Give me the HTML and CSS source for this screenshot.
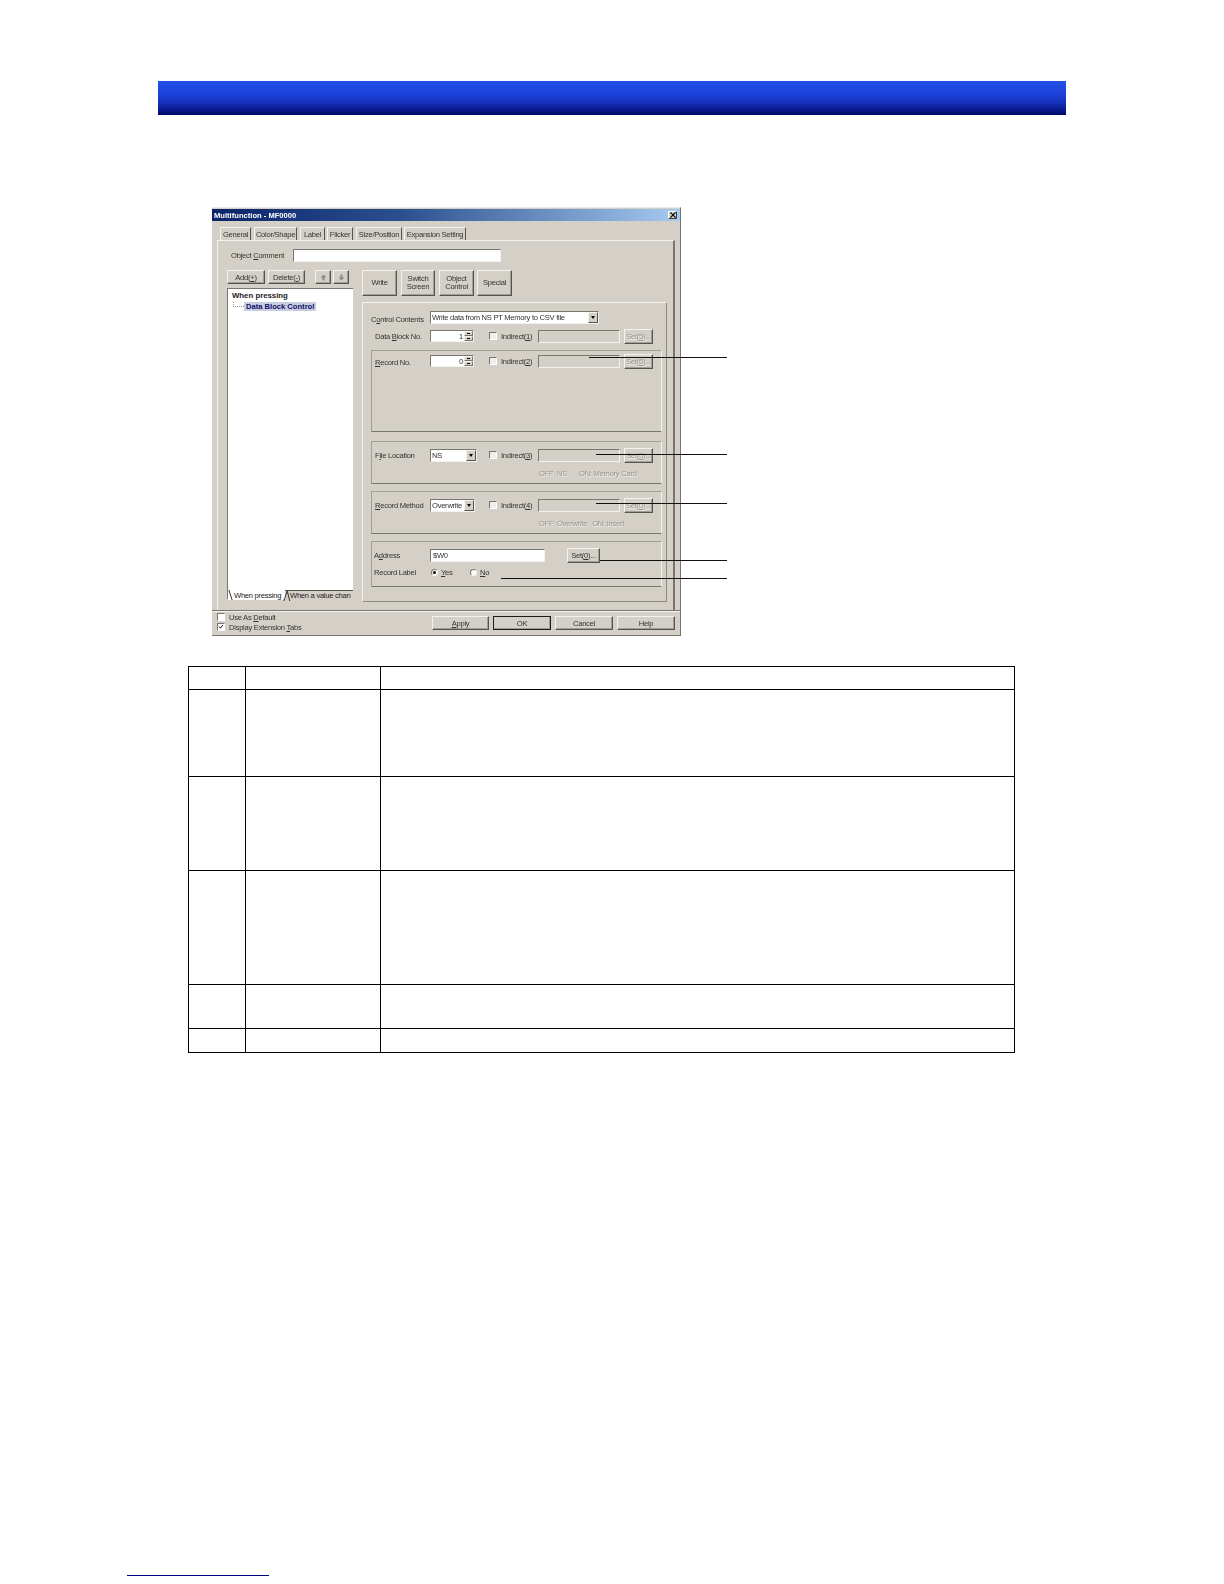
FILE: index.html
```html
<!DOCTYPE html>
<html lang="en">
<head>
<meta charset="utf-8">
<title>Multifunction - MF0000</title>
<link rel="stylesheet" href="styles.css">
</head>
<body>
<div class="band"></div>
<div class="dialog">
  <div class="titlebar">
    <span class="title">Multifunction - MF0000</span>
    <span class="closebtn"><svg width="7" height="7" viewBox="0 0 7 7"><path d="M0.5 0.5L6.5 6.5M6.5 0.5L0.5 6.5" stroke="#000" stroke-width="1.4"/></svg></span>
  </div>
  <div class="tabs">
    <span class="tab tab-active tab-general">General</span>
    <span class="tab tab-color">Color/Shape</span>
    <span class="tab tab-label">Label</span>
    <span class="tab tab-flicker">Flicker</span>
    <span class="tab tab-size">Size/Position</span>
    <span class="tab tab-exp">Expansion Setting</span>
  </div>
  <div class="panel">
    <div class="comment-row">
      <span class="comment-label">Object <u>C</u>omment</span>
      <span class="input comment-input"></span>
    </div>
    <div class="main">
      <div class="left">
        <div class="list-tools">
          <span class="btn btn-add">Add(<u>+</u>)</span>
          <span class="btn btn-del">Delete(<u>-</u>)</span>
          <span class="btn btn-arrow btn-up"><svg width="7" height="7" viewBox="0 0 7 7"><path d="M3.5 0.5L6.5 3.5H4.5V6.5H2.5V3.5H0.5Z" fill="#8a8a86"/></svg></span>
          <span class="btn btn-arrow"><svg width="7" height="7" viewBox="0 0 7 7"><path d="M3.5 6.5L6.5 3.5H4.5V0.5H2.5V3.5H0.5Z" fill="#8a8a86"/></svg></span>
        </div>
        <div class="tree">
          <div class="tree-root">When pressing</div>
          <div class="tree-child"><span class="tree-dots"></span><span class="tree-sel">Data Block Control</span></div>
          <div class="tree-tabs">
            <span class="ttab ttab-on">When pressing</span>
            <span class="ttab ttab-off">When a value chan</span>
          </div>
        </div>
      </div>
      <div class="right">
        <div class="actions">
          <span class="btn action">Write</span>
          <span class="btn action action-narrow">Switch<br>Screen</span>
          <span class="btn action">Object<br>Control</span>
          <span class="btn action action-last">Special</span>
        </div>
        <div class="inner">
          <div class="cc-row">
            <span class="cc-label">C<u>o</u>ntrol Contents</span>
            <span class="input select cc-select"><span class="sel-text">Write data from NS PT Memory to CSV file</span><span class="drop"></span></span>
          </div>
          <div class="frow frow-top">
            <span class="flabel">Data <u>B</u>lock No.</span>
            <span class="cell"><span class="input spin"><span class="spin-val">1</span><span class="spinbtns"><i class="sb sb-up"></i><i class="sb sb-down"></i></span></span></span>
            <span class="chk"></span><span class="indirect">Indirect(<u>1</u>)</span>
            <span class="field"></span><span class="btn setbtn">Set(<u>5</u>)...</span>
          </div>
          <div class="group g1">
            <div class="frow">
              <span class="flabel flabel-low"><u>R</u>ecord No.</span>
              <span class="cell"><span class="input spin"><span class="spin-val">0</span><span class="spinbtns"><i class="sb sb-up"></i><i class="sb sb-down"></i></span></span></span>
              <span class="chk"></span><span class="indirect">Indirect(<u>2</u>)</span>
              <span class="field"></span><span class="btn setbtn">Set(<u>6</u>)...</span>
            </div>
          </div>
          <div class="group g2">
            <div class="frow">
              <span class="flabel">F<u>i</u>le Location</span>
              <span class="cell"><span class="input select sel-file"><span class="sel-text">NS</span><span class="drop"></span></span></span>
              <span class="chk"></span><span class="indirect">Indirect(<u>3</u>)</span>
              <span class="field"></span><span class="btn setbtn">Set(<u>0</u>)...</span>
            </div>
            <div class="note">OFF: NS<span class="note-gap"></span>ON: Memory Card</div>
          </div>
          <div class="group g3">
            <div class="frow">
              <span class="flabel"><u>R</u>ecord Method</span>
              <span class="cell"><span class="input select sel-method"><span class="sel-text">Overwrite</span><span class="drop"></span></span></span>
              <span class="chk"></span><span class="indirect">Indirect(<u>4</u>)</span>
              <span class="field"></span><span class="btn setbtn">Set(<u>0</u>)...</span>
            </div>
            <div class="note">OFF: Overwrite<span class="note-gap-sm"></span>ON: Insert</div>
          </div>
          <div class="group g4">
            <div class="frow">
              <span class="flabel flabel-tight">A<u>d</u>dress</span>
              <span class="input addr">$W0</span>
              <span class="btn setbtn setbtn-on">Set(<u>0</u>)...</span>
            </div>
            <div class="frow frow-radio">
              <span class="flabel flabel-tight">Record Label</span>
              <span class="radio radio-on"></span><span class="radio-text radio-yes"><u>Y</u>es</span>
              <span class="radio"></span><span class="radio-text"><u>N</u>o</span>
            </div>
          </div>
        </div>
      </div>
    </div>
  </div>
  <div class="footer">
    <div class="checks">
      <div class="check-row"><span class="chk chk-white"></span><span>Use As <u>D</u>efault</span></div>
      <div class="check-row"><span class="chk chk-white"><svg width="8" height="8" viewBox="0 0 8 8"><path d="M1.5 3.5L3.2 5.5L6.5 1.5" fill="none" stroke="#000" stroke-width="1.3"/></svg></span><span>Display Extension <u>T</u>abs</span></div>
    </div>
    <div class="foot-btns">
      <span class="btn foot-btn foot-apply"><u>A</u>pply</span>
      <span class="btn foot-btn foot-ok">OK</span>
      <span class="btn foot-btn">Cancel</span>
      <span class="btn foot-btn">Help</span>
    </div>
  </div>
  <i class="callout c1"></i>
  <i class="callout c2"></i>
  <i class="callout c3"></i>
  <i class="callout c4"></i>
  <i class="callout c5"></i>
</div>
<table class="spec">
  <tr class="r1"><td class="col-a"></td><td class="col-b"></td><td></td></tr>
  <tr class="r2"><td></td><td></td><td></td></tr>
  <tr class="r3"><td></td><td></td><td></td></tr>
  <tr class="r4"><td></td><td></td><td></td></tr>
  <tr class="r5"><td></td><td></td><td></td></tr>
  <tr class="r6"><td></td><td></td><td></td></tr>
</table>
<div class="foot-rule"></div>
</body>
</html>
```

FILE: styles.css
```css
* { box-sizing: border-box; }
html, body { margin: 0; padding: 0; background: #fff; }
body { width: 1224px; height: 1584px; overflow: hidden; padding-top: 81px; font-family: "Liberation Sans", Arial, sans-serif; }

.band {
  width: 908px; height: 34px; margin-left: 158px;
  background: linear-gradient(to bottom, #2450ea 0%, #1c40d8 40%, #1430b8 65%, #000868 100%);
}

.dialog {
  position: relative;
  width: 469px; height: 429px;
  margin: 92px 0 0 212px;
  background: #d4d0c8;
  border-top: 1px solid #ece9e2;
  border-right: 1px solid #77766f;
  border-bottom: 1px solid #77766f;
  font-size: 7.6px;
  letter-spacing: -.27px;
  color: #33332f;
  display: flex; flex-direction: column;
}
.dialog u { text-decoration: underline; }

.titlebar {
  height: 12px; margin: 1px 0 0 0; flex: none;
  background: linear-gradient(to right, #0a246a 0%, #2b4f8e 40%, #a6caf0 100%);
  display: flex; align-items: center; justify-content: space-between;
  padding: 0 3px 0 2px;
  filter: blur(.3px);
}
.title { color: #fff; font-weight: bold; font-size: 7.6px; letter-spacing: 0; }
.closebtn {
  width: 9px; height: 8px; background: #d4d0c8;
  border: 1px solid; border-color: #fff #404040 #404040 #fff;
  display: flex; align-items: center; justify-content: center;
}
.closebtn svg { width: 6px; height: 6px; }

.tabs { display: flex; height: 13px; margin: 6px 0 0 8px; flex: none; align-items: stretch; filter: blur(.3px); }
.tab {
  display: flex; align-items: center; justify-content: center; white-space: nowrap;
  border-right: 1px solid #55544f;
  border-left: 1px solid #f4f2ee;
  border-top: 1px solid #f4f2ee;
}
.tab-general { width: 31px; margin-right: 3px; border-bottom: 0; }
.tab-color { width: 43px; margin-right: 3px; }
.tab-label { width: 25px; margin-right: 2px; }
.tab-flicker { width: 26px; margin-right: 3px; }
.tab-size { width: 46px; margin-right: 2px; }
.tab-exp { width: 62px; }

.panel {
  width: 458px; height: 370px; margin-left: 5px; flex: none;
  border-top: 1px solid #f4f2ee;
  border-left: 1px solid #f4f2ee;
  border-right: 2px solid #77766f;
  display: flex; flex-direction: column;
  filter: blur(.3px);
}
.comment-row { display: flex; align-items: center; height: 13px; margin: 8px 0 0 13px; }
.comment-label { width: 62px; }
.comment-input { width: 208px; height: 13px; }
.input {
  display: inline-flex; align-items: center; background: #fff;
  border: 1px solid; border-color: #77766f #f4f2ee #f4f2ee #77766f;
  white-space: nowrap;
}
.main { display: flex; margin: 8px 0 0 9px; }
.left { width: 126px; margin-right: 9px; display: flex; flex-direction: column; }
.list-tools { display: flex; height: 14px; }
.btn {
  display: inline-flex; align-items: center; justify-content: center; text-align: center;
  background: #d4d0c8; white-space: nowrap;
  border: 1px solid; border-color: #f4f2ee #55544f #55544f #f4f2ee;
  box-shadow: inset -1px -1px 0 #a09e98;
}
.btn-add { width: 38px; margin-right: 3px; }
.btn-del { width: 37px; margin-right: 10px; }
.btn-arrow { width: 16px; }
.btn-up { margin-right: 2px; }

.tree {
  height: 311px; margin-top: 4px; background: #fff; position: relative;
  border-left: 1px solid #77766f; border-top: 1px solid #77766f;
  display: flex; flex-direction: column;
  padding: 2px 0 0 4px;
  color: #1c1c1a;
}
.tree-root { font-weight: bold; font-size: 7.8px; height: 10px; line-height: 10px; letter-spacing: 0; }
.tree-child { display: flex; align-items: center; height: 10px; }
.tree-dots { width: 11px; height: 5px; border-left: 1px dotted #999; border-bottom: 1px dotted #999; margin: 0 0 3px 1px; }
.tree-sel { background: #c8cee0; color: #10106a; font-weight: bold; font-size: 7.6px; padding: 0 2px; line-height: 9px; white-space: nowrap; letter-spacing: 0; }
.tree-tabs { position: absolute; left: 0; right: 0; bottom: -1px; height: 10px; display: flex; white-space: nowrap; }
.ttab { display: flex; align-items: center; position: relative; }
.ttab-on { width: 55px; padding-left: 6px; background: #fff; }
.ttab-off { flex: 1; min-width: 0; margin-left: 2px; padding-left: 5px; background: #d4d0c8; border-top: 1px solid #55544f; }
.ttab::before { content: ""; position: absolute; left: 2px; top: 0; height: 10px; border-left: 1px solid #33332f; transform: skewX(18deg); }
.ttab-off::before { left: 0; transform: skewX(-18deg); }
.ttab-off::after { content: ""; position: absolute; left: 3px; top: 0; height: 10px; border-left: 1px solid #33332f; transform: skewX(14deg); }

.right { width: 305px; }
.actions { display: flex; gap: 4px; height: 26px; }
.action { width: 35px; line-height: 8.5px; }
.action-narrow { width: 34px; }
.action-last { margin-left: -1px; }
.inner {
  height: 300px; margin-top: 6px;
  border-top: 1px solid #f4f2ee; border-left: 1px solid #f4f2ee;
  border-right: 1px solid #8a8983; border-bottom: 1px solid #8a8983;
  padding: 8px 4px 0 8px;
}
.cc-row { display: flex; align-items: center; height: 13px; }
.cc-label { width: 59px; white-space: nowrap; margin-top: 3px; }
.select { position: relative; overflow: hidden; padding-left: 1px; }
.cc-select { width: 169px; height: 13px; }
.sel-text { overflow: hidden; }
.drop {
  position: absolute; right: 0; top: 0; bottom: 0; width: 10px; background: #d4d0c8;
  border: 1px solid; border-color: #f4f2ee #55544f #55544f #f4f2ee;
}
.drop::after {
  content: ""; position: absolute; left: 2px; top: 3px;
  border: 2.5px solid transparent; border-top: 3px solid #000; border-bottom: 0;
}
.frow { display: flex; align-items: center; height: 16px; padding-left: 3px; }
.frow-top { margin-top: 4px; padding-left: 4px; }
.flabel { width: 55px; white-space: nowrap; }
.flabel-low { margin-top: 3px; }
.cell { width: 59px; display: flex; }
.spin { width: 44px; height: 12px; position: relative; justify-content: flex-end; padding-right: 10px; }
.spinbtns { position: absolute; right: 0; top: 0; bottom: 0; width: 9px; display: flex; flex-direction: column; background: #d4d0c8; }
.sb { flex: 1; position: relative; border: 1px solid; border-color: #f4f2ee #77766f #77766f #f4f2ee; }
.sb-up::after, .sb-down::after { content: ""; position: absolute; left: 2px; top: 1px; width: 3px; height: 1px; background: #000; }
.chk {
  width: 8px; height: 8px; flex: none; margin-right: 4px; background: #eeeeec; display: inline-block;
  border: 1px solid; border-color: #77766f #fff #fff #77766f;
}
.chk-white { background: #fff; }
.chk svg { display: block; width: 6px; height: 6px; }
.indirect { width: 37px; white-space: nowrap; }
.field {
  width: 82px; height: 13px; margin-right: 4px;
  border: 1px solid; border-color: #77766f #f4f2ee #f4f2ee #77766f;
}
.setbtn { width: 29px; height: 15px; color: #96948e; text-shadow: .5px .5px 0 #f4f2ee; }
.setbtn-on { width: 33px; margin-left: 22px; color: #33332f; text-shadow: none; }

.group {
  width: 291px;
  border: 1px solid; border-color: #a09e98 #f4f2ee #77766f #a09e98;
}
.g1 { height: 82px; margin-top: 6px; padding-top: 2px; }
.g2 { height: 43px; margin-top: 9px; padding-top: 5px; }
.g3 { height: 43px; margin-top: 7px; padding-top: 5px; }
.g4 { height: 46px; margin-top: 7px; padding-top: 5px; }
.sel-file { width: 47px; height: 13px; }
.sel-method { width: 45px; height: 13px; }
.note { margin: 6px 0 0 167px; color: #96948e; text-shadow: .5px .5px 0 #f4f2ee; white-space: nowrap; }
.note-gap { display: inline-block; width: 12px; }
.note-gap-sm { display: inline-block; width: 5px; }
.flabel-tight { width: 56px; margin-left: -1px; }
.addr { width: 115px; height: 13px; padding-left: 2px; }
.frow-radio { height: 12px; margin-top: 3px; }
.radio {
  width: 7px; height: 7px; border-radius: 50%; background: #fff; position: relative; flex: none; margin-left: 1px;
  border: 1px solid; border-color: #77766f #f4f2ee #f4f2ee #77766f;
}
.radio-on::after { content: ""; position: absolute; left: 1px; top: 1px; width: 3px; height: 3px; border-radius: 50%; background: #000; }
.radio-text { margin-left: 3px; }
.radio-yes { width: 28px; }

.footer { flex: 1; border-top: 1px solid #77766f; box-shadow: inset 0 1px 0 #f4f2ee; display: flex; justify-content: space-between; padding: 5px 5px 0 5px; filter: blur(.3px); }
.checks { display: flex; flex-direction: column; margin-top: -4px; }
.check-row { display: flex; align-items: center; height: 10px; }
.foot-btns { display: flex; gap: 4px; }
.foot-btn { width: 58px; height: 14px; }
.foot-apply { width: 57px; }
.foot-ok { border: 1px solid #1c1c1a; }

.callout { position: absolute; height: 1px; background: #111; right: -47px; }
.c1 { top: 149px; width: 138px; }
.c2 { top: 246px; width: 131px; }
.c3 { top: 295px; width: 131px; }
.c4 { top: 352px; width: 127px; }
.c5 { top: 370px; width: 226px; }

.spec { border-collapse: collapse; table-layout: fixed; width: 827px; margin: 30px 0 0 188px; }
.spec td { border: 1px solid #000; padding: 0; }
.col-a { width: 57px; }
.col-b { width: 135px; }
.r1 { height: 23px; }
.r2 { height: 87px; }
.r3 { height: 94px; }
.r4 { height: 114px; }
.r5 { height: 44px; }
.r6 { height: 24px; }

.foot-rule { width: 142px; height: 1px; margin: 522px 0 0 127px; background: #000080; }
```
